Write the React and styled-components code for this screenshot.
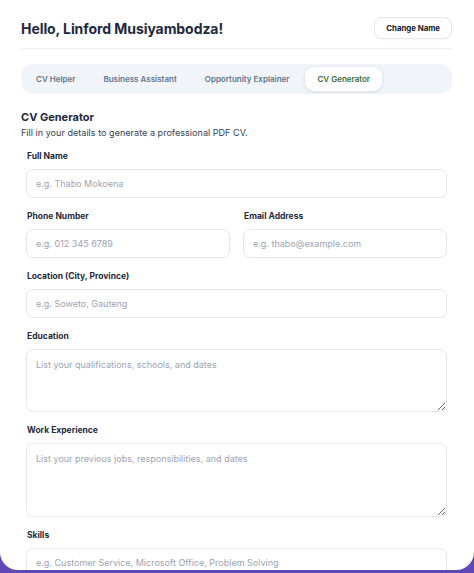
import React from "react";
import styled, { createGlobalStyle } from "styled-components";

const Global = createGlobalStyle`
  html, body { margin: 0; padding: 0; }
  body {
    background: #6049b6;
    font-family: Inter, "Liberation Sans", Arial, sans-serif;
    -webkit-font-smoothing: antialiased;
  }
  * { box-sizing: border-box; }
`;

const Card = styled.div`
  background: #ffffff;
  height: 570px;
  overflow: hidden;
  border-radius: 0 0 18px 18px;
  padding: 0 22px 0 21px;
`;

const Header = styled.header`
  display: flex;
  align-items: center;
  justify-content: space-between;
  padding: 17px 0 9px;
  border-bottom: 1px solid #eef0f4;
`;

const Title = styled.h1`
  margin: 0;
  font-size: 14px;
  font-weight: 700;
  color: #1e293b;
  letter-spacing: -0.005em;
`;

const GhostButton = styled.button`
  height: 22px;
  padding: 0 11px;
  border: 1px solid #e5e7eb;
  border-radius: 8px;
  background: #fff;
  font-family: inherit;
  font-size: 7.8px;
  font-weight: 700;
  color: #111827;
  box-shadow: 0 1px 2px rgba(0, 0, 0, 0.03);
`;

const TabBar = styled.nav`
  margin-top: 15px;
  display: flex;
  gap: 4px;
  padding: 3px;
  height: 30px;
  background: #f1f5f9;
  border-radius: 12px;
`;

const Tab = styled.div`
  display: flex;
  align-items: center;
  padding: 0 12px;
  border-radius: 9px;
  font-size: 8px;
  font-weight: 600;
  color: ${(p) => (p.$active ? "#3f6b3a" : "#64748b")};
  background: ${(p) => (p.$active ? "#ffffff" : "transparent")};
  box-shadow: ${(p) => (p.$active ? "0 1px 4px rgba(15, 23, 42, 0.12)" : "none")};
`;

const Section = styled.section`
  margin-top: 16px;
`;

const SectionTitle = styled.h2`
  margin: 0;
  font-size: 11px;
  font-weight: 700;
  color: #1e293b;
  line-height: 15px;
`;

const SectionSub = styled.p`
  margin: 1px 0 0;
  font-size: 9.1px;
  color: #374151;
  line-height: 13px;
`;

const Form = styled.form`
  margin-top: 11px;
  padding: 0 5px;
  display: flex;
  flex-direction: column;
  gap: 12px;
`;

const Row = styled.div`
  display: grid;
  grid-template-columns: 1fr 1fr;
  gap: 13px;
`;

const Field = styled.div`
  display: flex;
  flex-direction: column;
`;

const Label = styled.label`
  font-size: 8.5px;
  font-weight: 700;
  color: #1f2937;
  line-height: 12px;
  margin-bottom: 7px;
  padding-left: 1px;
`;

const Input = styled.input`
  display: block;
  width: 100%;
  height: 29px;
  padding: 0 9px;
  border: 1px solid #e5e7eb;
  border-radius: 7px;
  font-family: inherit;
  font-size: 9px;
  color: #111827;
  background: #fff;
  &::placeholder { color: #9ca3af; }
`;

const TextArea = styled.textarea`
  display: block;
  width: 100%;
  height: ${(p) => p.$h}px;
  padding: 8px 9px;
  border: 1px solid #e5e7eb;
  border-radius: 7px;
  font-family: inherit;
  font-size: 9px;
  line-height: 14px;
  color: #111827;
  background: #fff;
  resize: vertical;
  &::placeholder { color: #9ca3af; }
`;

const tabs = ["CV Helper", "Business Assistant", "Opportunity Explainer", "CV Generator"];

export default function App() {
  return (
    <>
      <Global />
      <Card>
        <Header>
          <Title>Hello, Linford Musiyambodza!</Title>
          <GhostButton type="button">Change Name</GhostButton>
        </Header>
        <TabBar>
          {tabs.map((t) => (
            <Tab key={t} $active={t === "CV Generator"}>
              {t}
            </Tab>
          ))}
        </TabBar>
        <Section>
          <SectionTitle>CV Generator</SectionTitle>
          <SectionSub>Fill in your details to generate a professional PDF CV.</SectionSub>
          <Form onSubmit={(e) => e.preventDefault()}>
            <Field>
              <Label>Full Name</Label>
              <Input placeholder="e.g. Thabo Mokoena" />
            </Field>
            <Row>
              <Field>
                <Label>Phone Number</Label>
                <Input placeholder="e.g. 012 345 6789" />
              </Field>
              <Field>
                <Label>Email Address</Label>
                <Input placeholder="e.g. thabo@example.com" />
              </Field>
            </Row>
            <Field>
              <Label>Location (City, Province)</Label>
              <Input placeholder="e.g. Soweto, Gauteng" />
            </Field>
            <Field>
              <Label>Education</Label>
              <TextArea $h={63} placeholder="List your qualifications, schools, and dates" />
            </Field>
            <Field>
              <Label>Work Experience</Label>
              <TextArea $h={74} placeholder="List your previous jobs, responsibilities, and dates" />
            </Field>
            <Field>
              <Label>Skills</Label>
              <Input placeholder="e.g. Customer Service, Microsoft Office, Problem Solving" />
            </Field>
          </Form>
        </Section>
      </Card>
    </>
  );
}
